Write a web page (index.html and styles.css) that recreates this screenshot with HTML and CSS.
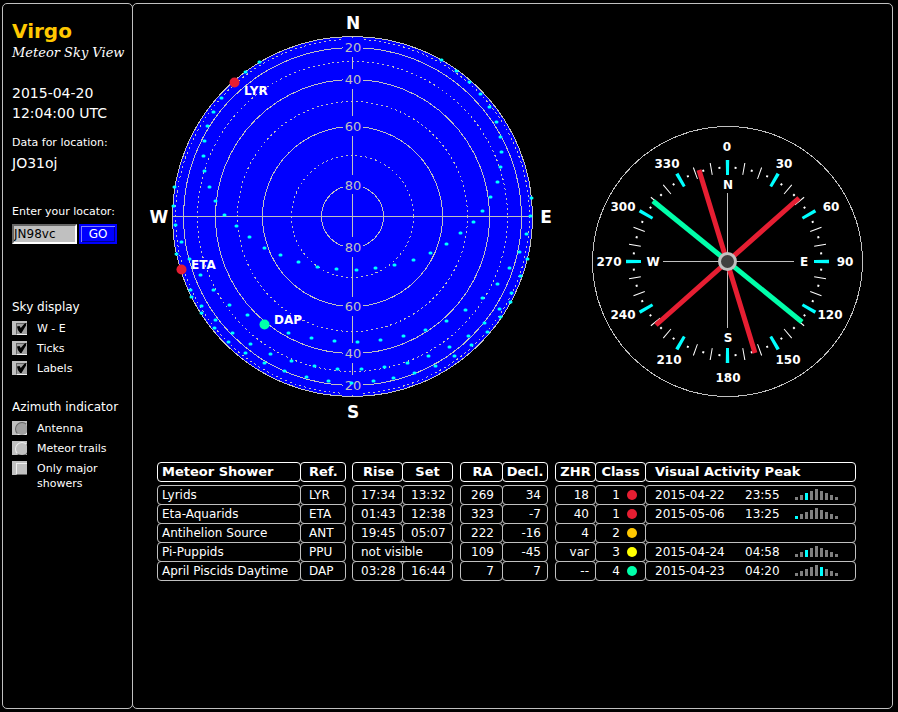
FILE: index.html
```
<!DOCTYPE html>
<html lang="en">
<head>
    <meta charset="UTF-8">
    <meta name="viewport" content="width=device-width, initial-scale=1.0">
    <title>Virgo - Meteor Sky View</title>
    <link rel="stylesheet" href="styles.css">
</head>
<body>
    <aside class="sidebar">
        <h1>Virgo</h1>
        <p class="subtitle">Meteor Sky View</p>

        <p class="clock">2015-04-20<br>12:04:00 UTC</p>

        <p class="small">Data for location:</p>
        <p class="location">JO31oj</p>

        <form class="locator">
            <label class="small" for="locator">Enter your locator:</label>
            <div class="locator-row">
                <input type="text" id="locator" value="JN98vc">
                <button type="button">GO</button>
            </div>
        </form>

        <form class="options">
            <h2>Sky display</h2>
            <label><input type="checkbox" checked><span>W - E</span></label>
            <label><input type="checkbox" checked><span>Ticks</span></label>
            <label><input type="checkbox" checked><span>Labels</span></label>
        </form>

        <form class="options">
            <h2>Azimuth indicator</h2>
            <label><input type="radio" name="azimuth" checked><span>Antenna</span></label>
            <label><input type="radio" name="azimuth"><span>Meteor trails</span></label>
            <label><input type="checkbox"><span>Only major showers</span></label>
        </form>
    </aside>

    <main>
        <div class="charts">
            <svg class="sky" width="415" height="424" viewBox="145 4 415 424">
                <circle class="sky-disc" cx="352.5" cy="216.5" r="180"/>
                <g class="rings">
                    <circle cx="352.5" cy="216.5" r="31"/>
                    <circle cx="352.5" cy="216.5" r="90"/>
                    <circle cx="352.5" cy="216.5" r="137"/>
                    <circle cx="352.5" cy="216.5" r="169"/>
                    <g stroke-dasharray="2 3">
                        <circle cx="352.5" cy="216.5" r="61"/>
                        <circle cx="352.5" cy="216.5" r="115"/>
                        <circle cx="352.5" cy="216.5" r="155"/>
                        <circle cx="352.5" cy="216.5" r="177"/>
                    </g>
                    <path d="M172 216.5H533M352.5 37V396"/>
                </g>

                <!-- elevation labels -->
                <path class="label-back" d="M343 38h20v19h-20zM343 69h20v20h-20zM343 116h20v20h-20zM343 175h20v19h-20zM343 237h20v20h-20zM343 297h20v19h-20zM343 343h20v20h-20zM343 375h20v20h-20z"/>
                <g class="elevation">
                    <text x="353" y="52">20</text>
                    <text x="353" y="84">40</text>
                    <text x="353" y="131">60</text>
                    <text x="353" y="190">80</text>
                    <text x="353" y="252">80</text>
                    <text x="353" y="311">60</text>
                    <text x="353" y="358">40</text>
                    <text x="353" y="390">20</text>
                </g>

                <!-- radiant tracks -->
                <path class="track" d="M259 62h1M245 72h1M221 98h1M213 112h1M207 126h1M204 141h1M203 156h1M204 171h1M209 187h1M215 201h1M224 215h1M236 226h1M249 237h1M264 248h1M280 255h1M298 262h1M317 267h1M336 269h1M356 270h1M375 268h1M394 265h1M413 260h1M430 253h1M446 244h1M460 233h1M473 222h1M482 211h1M490 197h1M497 182h1M500 167h1M501 152h1M500 137h1M496 122h1M489 107h1M480 94h1M469 82h1M456 71h1M441 60h1"/>
                <path class="track" d="M174 187h1M173 206h1M175 225h1M181 242h1M189 259h1M200 275h1M213 290h1M229 305h1M247 315h1M288 333h1M311 338h1M334 341h1M357 342h1M380 340h1M403 336h1M425 330h1M446 321h1M465 310h1M482 298h1M497 284h1M509 268h1M519 252h1M526 234h1M530 216h1M531 198h1"/>
                <path class="track" d="M176 254h1M190 290h1M201 306h1M215 320h1M232 333h1M250 344h1M270 354h1M291 361h1M314 366h1M337 369h1M361 369h1M384 367h1M407 363h1M428 356h1M449 347h1M468 336h1M484 323h1M499 309h1M511 293h1M520 276h1M527 259h1"/>
                <path class="track" d="M191 297h1M201 313h1M214 328h1M228 342h1M245 353h1M264 363h1M284 371h1M306 377h1M328 381h1M351 383h1M373 381h1M393 378h1M414 373h1M435 366h1M454 356h1M471 345h1M487 332h1M500 317h1M510 302h1"/>

                <circle class="class-1" cx="234.5" cy="82.5" r="5"/>
                <circle class="class-1" cx="181.5" cy="269.5" r="5"/>
                <circle class="class-4" cx="264.5" cy="324.5" r="5"/>
                <g class="names">
                    <text x="244" y="95">LYR</text>
                    <text x="191" y="269">ETA</text>
                    <text x="274" y="324">DAP</text>
                </g>
                <g class="cardinals">
                    <text x="353" y="29">N</text>
                    <text x="353" y="418">S</text>
                    <text x="159" y="223">W</text>
                    <text x="546" y="223">E</text>
                </g>
            </svg>

            <svg class="compass" width="272" height="272" viewBox="591 125 272 272">
                <g fill="none">
                    <circle class="rim" cx="727.5" cy="261.5" r="135"/>
                    <circle class="tick-dots" cx="727.5" cy="261.5" r="94" pathLength="3600"/>
                    <circle class="ticks" cx="727.5" cy="261.5" r="94" pathLength="3600"/>
                    <circle class="main-ticks" cx="727.5" cy="261.5" r="94" pathLength="3600"/>
                    <path class="cross" d="M663 261.5H794M727.5 193V328"/>
                </g>
                <g class="arms">
                    <path class="arm-1" d="M799 198L656 325M699 170L755 353"/>
                    <path class="arm-4" d="M653 201L802 322"/>
                </g>
                <circle class="hub" cx="727.5" cy="261.5" r="8"/>
                <g class="degrees">
                    <text x="727" y="151">0</text>
                    <text x="784" y="168">30</text>
                    <text x="831" y="211">60</text>
                    <text x="845" y="266">90</text>
                    <text x="830" y="319">120</text>
                    <text x="788" y="364">150</text>
                    <text x="728" y="382">180</text>
                    <text x="669" y="364">210</text>
                    <text x="623" y="319">240</text>
                    <text x="609" y="266">270</text>
                    <text x="623" y="211">300</text>
                    <text x="667" y="168">330</text>
                    <text x="728" y="189">N</text>
                    <text x="804" y="266">E</text>
                    <text x="728" y="342">S</text>
                    <text x="653" y="266">W</text>
                </g>
            </svg>
        </div>

        <svg class="defs" width="0" height="0">
            <symbol id="bars" viewBox="0 0 43 11">
                <path d="M0 8h3v3h-3zM5 6h3v5h-3zM10 4h3v7h-3zM15 2h3v9h-3zM20 0h3v11h-3zM25 2h3v9h-3zM30 4h3v7h-3zM35 6h3v5h-3zM40 8h3v3h-3z"/>
            </symbol>
        </svg>

        <table>
            <thead>
                <tr>
                    <th>Meteor Shower</th><th class="ref">Ref.</th>
                    <th class="group mid">Rise</th><th class="mid">Set</th>
                    <th class="group mid ra">RA</th><th class="mid">Decl.</th>
                    <th class="group mid zhr">ZHR</th><th class="mid">Class</th>
                    <th class="peak">Visual Activity Peak</th>
                </tr>
            </thead>
            <tbody>
                <tr>
                    <td>Lyrids</td><td class="ref">LYR</td>
                    <td class="group time">17:34</td><td class="time">13:32</td>
                    <td class="group num ra">269</td><td class="num">34</td>
                    <td class="group num zhr">18</td><td class="num class">1<i class="dot red"></i></td>
                    <td class="peak">
                        <span class="date">2015-04-22</span><span class="hour">23:55</span>
                        <svg class="bars" width="43" height="11"><use href="#bars"/><path class="now" d="M10 4h3v7h-3z"/></svg>
                    </td>
                </tr>
                <tr>
                    <td>Eta-Aquarids</td><td class="ref">ETA</td>
                    <td class="group time">01:43</td><td class="time">12:38</td>
                    <td class="group num ra">323</td><td class="num">-7</td>
                    <td class="group num zhr">40</td><td class="num class">1<i class="dot red"></i></td>
                    <td class="peak">
                        <span class="date">2015-05-06</span><span class="hour">13:25</span>
                        <svg class="bars" width="43" height="11"><use href="#bars"/><path class="now" d="M0 8h3v3h-3z"/></svg>
                    </td>
                </tr>
                <tr>
                    <td>Antihelion Source</td><td class="ref">ANT</td>
                    <td class="group time">19:45</td><td class="time">05:07</td>
                    <td class="group num ra">222</td><td class="num">-16</td>
                    <td class="group num zhr">4</td><td class="num class">2<i class="dot orange"></i></td>
                    <td class="peak"></td>
                </tr>
                <tr>
                    <td>Pi-Puppids</td><td class="ref">PPU</td>
                    <td class="group time wide" colspan="2">not visible</td>
                    <td class="group num ra">109</td><td class="num">-45</td>
                    <td class="group num zhr">var</td><td class="num class">3<i class="dot yellow"></i></td>
                    <td class="peak">
                        <span class="date">2015-04-24</span><span class="hour">04:58</span>
                        <svg class="bars" width="43" height="11"><use href="#bars"/><path class="now" d="M10 4h3v7h-3z"/></svg>
                    </td>
                </tr>
                <tr>
                    <td>April Piscids Daytime</td><td class="ref">DAP</td>
                    <td class="group time">03:28</td><td class="time">16:44</td>
                    <td class="group num ra">7</td><td class="num">7</td>
                    <td class="group num zhr">--</td><td class="num class">4<i class="dot green"></i></td>
                    <td class="peak">
                        <span class="date">2015-04-23</span><span class="hour">04:20</span>
                        <svg class="bars" width="43" height="11"><use href="#bars"/><path class="now" d="M25 2h3v9h-3z"/></svg>
                    </td>
                </tr>
            </tbody>
        </table>
    </main>
</body>
</html>
```
FILE: styles.css
```
* {
    box-sizing: border-box;
}
body {
    display: grid;
    grid-template-columns: 131px 1fr;
    min-height: 100vh;
    margin: 0;
    padding: 3px 5px 3px 2px;
    background-color: #000;
    color: #fff;
    font-family: "DejaVu Sans", sans-serif;
    font-size: 12px;
    line-height: 20px;
}
h1, h2, p {
    margin: 0;
}
.sidebar, main {
    border: 1px solid #c0c0c0;
    border-radius: 5px;
}
.sidebar {
    padding: 15px 5px 0 9px;
}
main {
    margin-left: -1px;
}

/* sidebar */
h1 {
    color: #ffc800;
    font-size: 20px;
    line-height: 24px;
}
h2 {
    font-size: 12px;
    font-weight: normal;
    margin-bottom: 2px;
    white-space: nowrap;
}
.subtitle {
    font-family: "DejaVu Serif", serif;
    font-style: italic;
    font-size: 13px;
    white-space: nowrap;
}
.clock {
    font-size: 14px;
    margin: 20px 0 10px;
    white-space: nowrap;
}
.small {
    display: block;
    font-size: 11px;
}
.location {
    font-size: 14px;
}
.locator {
    margin: 29px 0 53px;
}
.locator-row {
    display: flex;
    gap: 2px;
    margin-top: 2px;
}
.locator input {
    width: 65px;
    height: 20px;
    padding: 0;
    border: 2px solid;
    border-color: #666 #fff #fff #666;
    background-color: #c0c0c0;
    color: #000;
    font: 12px "DejaVu Sans", sans-serif;
}
.locator button {
    width: 38px;
    height: 20px;
    padding: 0;
    border: 2px solid #00f;
    background-color: #00f;
    box-shadow: inset 1px 1px #8080ff, inset -1px -1px #00008b;
    color: #fff;
    font: 12px "DejaVu Sans", sans-serif;
}
.options {
    margin-bottom: 18px;
}
.options label {
    display: flex;
    gap: 10px;
    padding: 2px 0 3px;
    font-size: 11px;
    line-height: 15px;
}
.options input {
    appearance: none;
    position: relative;
    flex: none;
    width: 15px;
    height: 14px;
    margin: 0;
    overflow: hidden;
    background-color: #c0c0c0;
}
.options input::before {
    content: "";
    position: absolute;
    left: 4px;
    top: 2px;
    width: 10px;
    height: 10px;
    border: 1px solid;
    border-color: #eee #666 #666 #eee;
}
.options input:checked::before {
    border-color: #666 #eee #eee #666;
    background-color: #a0a0a0;
}
.options input[type="radio"]::before {
    left: 3px;
    top: 1px;
    width: 12px;
    height: 12px;
    border-radius: 50%;
}
.options input[type="checkbox"]:checked::after {
    content: "";
    position: absolute;
    left: 5px;
    top: 2px;
    width: 9px;
    height: 10px;
    background-color: #000;
    clip-path: polygon(0 35%, 28% 30%, 42% 50%, 80% 10%, 100% 0, 100% 25%, 50% 100%, 35% 100%, 10% 70%);
}

/* charts */
.charts {
    display: flex;
    align-items: center;
    gap: 31px;
    padding-left: 12px;
}
.charts svg {
    flex: none;
}
.compass {
    margin-top: 90px;
}
.defs {
    display: block;
}
.sky-disc {
    fill: #00f;
    stroke: #c0c0c0;
    shape-rendering: crispEdges;
}
.rings {
    fill: none;
    stroke: #c0c0c0;
    shape-rendering: crispEdges;
}
.label-back {
    fill: #00f;
}
.elevation {
    fill: #c0c0c0;
    font-size: 13px;
    text-anchor: middle;
}
.track {
    fill: none;
    stroke: #0ff;
    stroke-width: 3px;
    stroke-linecap: round;
}
.names, .cardinals, .degrees {
    fill: #fff;
    font-weight: bold;
}
.names {
    font-size: 12px;
}
.cardinals {
    font-size: 17px;
    text-anchor: middle;
}
.degrees {
    font-size: 12px;
    text-anchor: middle;
}
.class-1 {
    fill: #e61e32;
}
.class-4 {
    fill: #00ffaa;
}
.rim, .cross {
    stroke: #c0c0c0;
    shape-rendering: crispEdges;
}
.tick-dots {
    stroke: #fff;
    stroke-width: 2px;
    stroke-dasharray: 12 88;
    stroke-dashoffset: -44;
}
.ticks {
    stroke: #fff;
    stroke-width: 12px;
    stroke-dasharray: 6 94;
    stroke-dashoffset: 3;
}
.main-ticks {
    stroke: #0ff;
    stroke-width: 15px;
    stroke-dasharray: 20 280;
    stroke-dashoffset: 10;
}
.arms {
    fill: none;
    stroke-width: 5px;
}
.arm-1 {
    stroke: #e61e32;
}
.arm-4 {
    stroke: #00ffaa;
}
.hub {
    fill: #404040;
    stroke: #c0c0c0;
    stroke-width: 3px;
}

/* shower table */
table {
    display: block;
    margin: 34px 24px 0;
    line-height: 18px;
}
thead, tbody {
    display: block;
}
thead {
    margin-bottom: 4px;
}
tr {
    display: grid;
    grid-template-columns: 143px 45px 57px 50px 50px 45px 48px 50px 210px;
    height: 19px;
}
th, td {
    height: 20px;
    margin-right: -1px;
    padding: 0 4px;
    border: 1px solid #c0c0c0;
    border-radius: 4px;
    text-align: left;
    white-space: nowrap;
}
th {
    border-color: #fff;
    font-size: 13px;
}
.ref, .time {
    padding-left: 8px;
}
.mid {
    padding: 0;
    text-align: center;
}
.num {
    padding-right: 6px;
    text-align: right;
}
.num.ra, .num.class {
    padding-right: 8px;
}
.group {
    margin-left: 7px;
}
.group.ra, .group.zhr {
    margin-left: 8px;
}
.group.mid {
    padding-left: 2px;
}
.group.mid.zhr {
    padding-left: 0;
}
.wide {
    grid-column: span 2;
}
.peak {
    padding-left: 9px;
}
td.peak {
    display: flex;
}
.date {
    width: 90px;
}
.hour {
    width: 50px;
}
.bars {
    margin-top: 3px;
    fill: #808080;
}
.now {
    fill: #0ff;
}
.dot {
    display: inline-block;
    width: 10px;
    height: 10px;
    margin-left: 7px;
    border-radius: 50%;
    vertical-align: -1px;
}
.red {
    background-color: #e61e32;
}
.orange {
    background-color: #ffc800;
}
.yellow {
    background-color: #ff0;
}
.green {
    background-color: #00ffaa;
}
```
